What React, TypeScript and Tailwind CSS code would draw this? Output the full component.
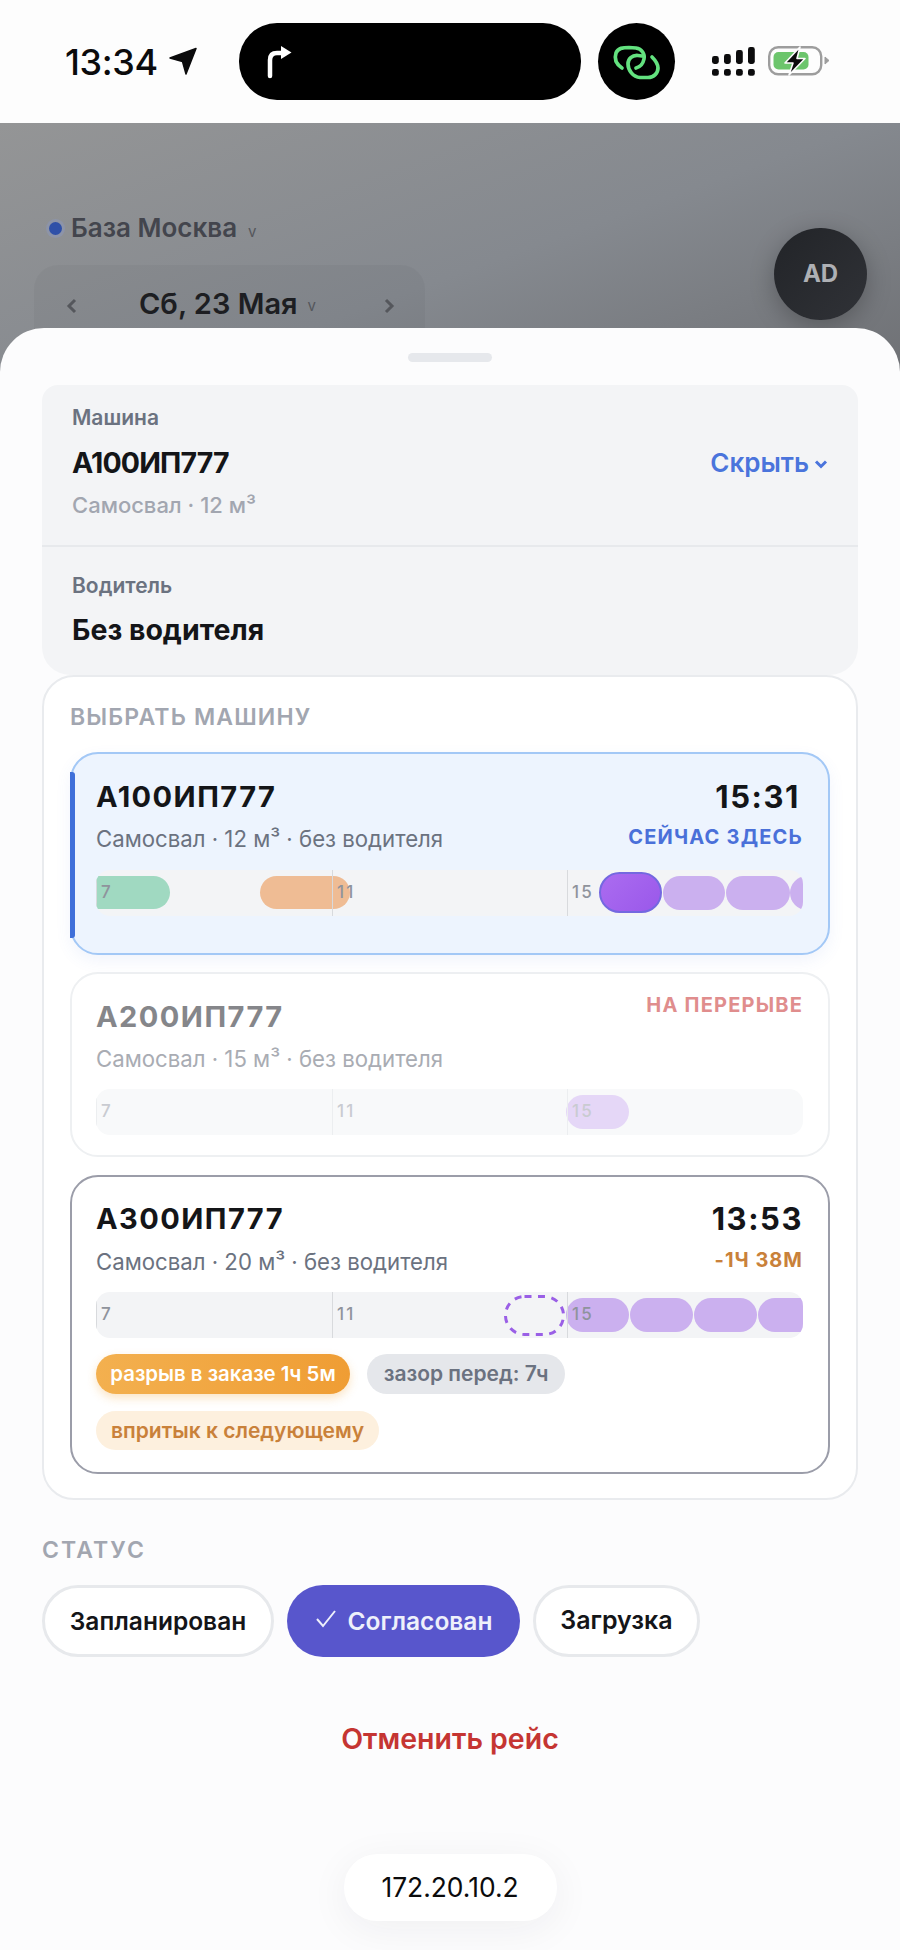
type Segment = { left: number; right: number; kind: "green" | "orange" | "purple" | "active" | "ghost" | "dashed" };

const HOURS = [
  { label: "7", x: 0 },
  { label: "11", x: 236 },
  { label: "15", x: 471 },
];

const SEG_CLASS: Record<Segment["kind"], string> = {
  green: "top-[6px] h-[33px] rounded-[18px] bg-[#a0d9c1]",
  orange: "top-[6px] h-[33px] rounded-[18px] bg-[#efbc94]",
  purple: "top-[6px] h-[34px] rounded-[18px] bg-[#cbb0ef]",
  active: "top-[2px] h-[41px] rounded-[21px] border-2 border-[#7468e0] bg-[linear-gradient(135deg,#ab6cf0,#9a58ea)]",
  ghost: "top-[6px] h-[34px] rounded-[18px] bg-[#e5d7f7]",
  dashed: "top-[3px] h-[41px]",
};

function Timeline({ segments, faded }: { segments: Segment[]; faded?: boolean }) {
  return (
    <div className={`relative h-[46px] w-[707px] overflow-hidden rounded-[14px] ${faded ? "bg-[#f8f9fa]" : "bg-[#f3f4f6]"}`}>
      {segments.map((s) => (
        <div
          key={s.left}
          className={`absolute ${SEG_CLASS[s.kind]}`}
          style={{ left: s.left, width: s.right - s.left }}
        >
          {s.kind === "dashed" && (
            <svg width="61" height="41" viewBox="0 0 61 41">
              <rect x="1.5" y="1.5" width="58" height="38" rx="19" fill="none" stroke="#9a5fe6" strokeWidth="3" strokeDasharray="7 6.5" />
            </svg>
          )}
        </div>
      ))}
      {HOURS.map((h) => (
        <div key={h.label}>
          <div className={`absolute top-0 h-full w-px ${faded ? "bg-[#eceef0]" : "bg-[#d8dadd]"}`} style={{ left: h.x }} />
          <span
            className={`absolute top-[12px] text-[17px] leading-[20px] font-medium tracking-[0.13em] ${faded ? "text-[#c9cbd1]" : "text-[#8f939c]"}`}
            style={{ left: h.x + 5 }}
          >
            {h.label}
          </span>
        </div>
      ))}
    </div>
  );
}

function NavArrow() {
  return (
    <svg width="28" height="28" viewBox="0 0 28 28" className="ml-[11px] mt-[-1px]">
      <path d="M27 1.5 L17 27 L13.5 14.5 L1 11 Z" fill="#0b0b0c" stroke="#0b0b0c" strokeWidth="1.5" strokeLinejoin="round" />
    </svg>
  );
}

function TurnArrow() {
  return (
    <svg width="26" height="34" viewBox="0 0 26 34" className="ml-[27px]">
      <path d="M4 31 V15 Q4 8 11 8 H17" fill="none" stroke="#fff" strokeWidth="4.5" strokeLinecap="round" />
      <path d="M15 1 L25.5 7.5 L15 14 Z" fill="#fff" />
    </svg>
  );
}

function LinkLoops() {
  return (
    <svg width="60" height="50" viewBox="0 0 60 50">
      <path d="M15 31 C9 27 7 22 9 16 C11 11 16 10.5 22 10.5 L29 11 C35 12 38 17 37 22 C36 27 33 30 29 31" fill="none" stroke="#63e27f" strokeWidth="3.7" strokeLinecap="round" />
      <path d="M35 19 L31 18.5 C25 18 21 22 21 27 C21 33 26 40 33 40.5 L41 40.5 C47 40.5 51 36 51 31 C51 26 48 23 45 20" fill="none" stroke="#63e27f" strokeWidth="3.7" strokeLinecap="round" />
    </svg>
  );
}

function SignalDots() {
  const cols = [
    { x: 0, top: 9, h: 8 },
    { x: 12, top: 7, h: 10 },
    { x: 24, top: 3, h: 14 },
    { x: 36, top: 0, h: 17 },
  ];
  return (
    <svg width="43" height="29" viewBox="0 0 43 29" className="ml-[37px]">
      {cols.map((c) => (
        <g key={c.x} fill="#0c0c0d">
          <rect x={c.x} y={c.top} width="6.8" height={c.h} rx="2.4" />
          <rect x={c.x} y="22" width="6.8" height="6.8" rx="2.2" />
        </g>
      ))}
    </svg>
  );
}

function Battery() {
  return (
    <svg width="62" height="31" viewBox="0 0 62 31" className="ml-[13px]">
      <rect x="1.2" y="1.2" width="52" height="27" rx="9" fill="none" stroke="#9d9d9d" strokeWidth="2.4" />
      <rect x="5.5" y="6" width="35" height="17.5" rx="5" fill="#6cc56c" />
      <path d="M57 11 L61 14.5 L57 18 Z" fill="#9d9d9d" stroke="#9d9d9d" strokeWidth="1" strokeLinejoin="round" />
      <path d="M32 1 L17 17 H25 L21 29 L37 12.5 H29 Z" fill="#0c0c0d" stroke="#fdfdfd" strokeWidth="1.6" strokeLinejoin="round" />
    </svg>
  );
}

function StatusBar() {
  return (
    <div className="flex h-[123px] items-start bg-[#fdfdfd] pt-[23px]">
      <div className="flex h-[77px] w-[239px] items-center pl-[65px]">
        <span className="text-[36px] leading-[40px] font-medium tracking-[-0.01em] text-[#0b0b0c]">13:34</span>
        <NavArrow />
      </div>
      <div className="flex h-[77px] w-[342px] items-center rounded-[38px] bg-black">
        <TurnArrow />
      </div>
      <div className="ml-[17px] flex h-[77px] w-[77px] items-center justify-center rounded-full bg-black">
        <LinkLoops />
      </div>
      <div className="flex h-[77px] items-center">
        <SignalDots />
        <Battery />
      </div>
    </div>
  );
}

function DimmedHeader() {
  return (
    <div className="flex h-[249px] items-start justify-between overflow-hidden bg-[linear-gradient(160deg,#949596_0%,#85898f_55%,#6f7175_100%)] pl-[34px] pr-[33px]">
      <div className="pt-[91px]">
        <div className="flex h-[28px] items-center pl-[15px]">
          <span className="h-[13px] w-[13px] rounded-full bg-[#2f50a8] shadow-[0_0_0_3px_#8d94a8]" />
          <span className="ml-[9px] text-[26px] leading-[28px] font-semibold text-[#43454d]">База Москва</span>
          <span className="ml-[11px] mt-[6px] text-[15px] leading-[15px] text-[#55575c]">v</span>
        </div>
        <div className="mt-[23px] flex h-[90px] w-[391px] items-start rounded-[24px] bg-[#00000008] pt-[25px]">
          <svg width="12" height="16" viewBox="0 0 12 16" className="ml-[32px] mt-[8px]">
            <path d="M9 2 L3 8 L9 14" fill="none" stroke="#55575c" strokeWidth="3" />
          </svg>
          <span className="ml-[61px] text-[29px] leading-[28px] font-semibold text-[#1d1e22]">Сб, 23 Мая</span>
          <span className="ml-[10px] mt-[8px] text-[15px] leading-[15px] text-[#55575c]">v</span>
          <svg width="12" height="16" viewBox="0 0 12 16" className="ml-[67px] mt-[8px]">
            <path d="M3 2 L9 8 L3 14" fill="none" stroke="#55575c" strokeWidth="3" />
          </svg>
        </div>
      </div>
      <div className="mt-[105px] flex h-[92px] w-[93px] items-center justify-center rounded-full bg-[linear-gradient(135deg,#222428,#303237)] shadow-[0_6px_24px_#00000040]">
        <span className="text-[24px] font-bold text-[#aeb0b4]">AD</span>
      </div>
    </div>
  );
}

function SummaryCard() {
  return (
    <div className="mt-[23px] rounded-[28px] rounded-t-[16px] bg-[#f3f4f6]">
      <div className="border-b-2 border-[#e7e9ec] px-[30px] pb-[26px] pt-[20px]">
        <div className="text-[21px] leading-[26px] font-semibold text-[#6b7280]">Машина</div>
        <div className="mt-[14px] flex items-center justify-between">
          <span className="text-[28.5px] leading-[36px] font-bold tracking-[-0.03em] text-[#141518]">А100ИП777</span>
          <span className="flex items-center text-[26px] leading-[36px] font-semibold text-[#4a74dc]">
            Скрыть
            <svg width="14" height="9" viewBox="0 0 14 9" className="ml-[5px] mr-[0px] mt-[2px]">
              <path d="M2 1.5 L7 6.5 L12 1.5" fill="none" stroke="#4a74dc" strokeWidth="3" />
            </svg>
          </span>
        </div>
        <div className="mt-[10px] text-[22px] leading-[28px] font-medium text-[#a2a6b0]">Самосвал · 12 м³</div>
      </div>
      <div className="px-[30px] pb-[27px] pt-[26px]">
        <div className="text-[21px] leading-[26px] font-semibold text-[#6b7280]">Водитель</div>
        <div className="mt-[13px] text-[28.5px] leading-[36px] font-bold text-[#141518]">Без водителя</div>
      </div>
    </div>
  );
}

function TruckList() {
  return (
    <div className="rounded-[32px] border-2 border-[#e9ebee] bg-white px-[26px] pb-[24px] pt-[27px]">
      <div className="text-[23px] leading-[26px] font-semibold tracking-[0.05em] text-[#a2a6b0]">ВЫБРАТЬ МАШИНУ</div>

      {/* Текущая машина */}
      <div className="relative mt-[22px] h-[203px] rounded-[28px] border-2 border-[#a3c8f6] bg-[#edf4fe] pl-[24px] pt-[25px] shadow-[0_6px_16px_#4a74dc14]">
        <div className="absolute left-[-2px] top-[18px] h-[166px] w-[5px] rounded-r-[3px] bg-[#3f6fd9]" />
        <div className="flex w-[707px] items-center justify-between">
          <span className="text-[29px] leading-[36px] font-bold tracking-[0.05em] text-[#141518]">А100ИП777</span>
          <span className="pr-[3px] text-[31px] leading-[36px] font-bold tracking-[0.05em] text-[#141518]">15:31</span>
        </div>
        <div className="mt-[10px] flex w-[707px] items-center justify-between">
          <span className="text-[22.2px] leading-[28px] text-[#6b7280]">Самосвал · 12 м³ · без водителя</span>
          <span className="mt-[-4px] text-[20px] leading-[28px] font-bold tracking-[0.06em] text-[#4a70d9]">СЕЙЧАС ЗДЕСЬ</span>
        </div>
        <div className="mt-[17px]">
          <Timeline
            segments={[
              { left: -20, right: 74, kind: "green" },
              { left: 164, right: 254, kind: "orange" },
              { left: 503, right: 566, kind: "active" },
              { left: 567, right: 629, kind: "purple" },
              { left: 630, right: 694, kind: "purple" },
              { left: 694, right: 760, kind: "purple" },
            ]}
          />
        </div>
      </div>

      {/* На перерыве */}
      <div className="mt-[17px] h-[185px] rounded-[28px] border-2 border-[#eef0f2] bg-white pl-[24px] pt-[25px]">
        <div className="flex w-[707px] items-start justify-between">
          <span className="text-[29px] leading-[36px] font-bold tracking-[0.05em] text-[#85868a]">А200ИП777</span>
          <span className="mt-[-8px] text-[20px] leading-[28px] font-bold tracking-[0.06em] text-[#e08d8d]">НА ПЕРЕРЫВЕ</span>
        </div>
        <div className="mt-[10px] text-[22.2px] leading-[28px] text-[#a9acb3]">Самосвал · 15 м³ · без водителя</div>
        <div className="mt-[16px]">
          <Timeline faded segments={[{ left: 470, right: 533, kind: "ghost" }]} />
        </div>
      </div>

      {/* С разрывом */}
      <div className="mt-[18px] h-[299px] rounded-[28px] border-2 border-[#9b9da9] bg-white pl-[24px] pt-[24px]">
        <div className="flex w-[707px] items-center justify-between">
          <span className="text-[29px] leading-[36px] font-bold tracking-[0.05em] text-[#141518]">А300ИП777</span>
          <span className="text-[31px] leading-[36px] font-bold tracking-[0.05em] text-[#141518]">13:53</span>
        </div>
        <div className="mt-[11px] flex w-[707px] items-center justify-between">
          <span className="text-[22.2px] leading-[28px] text-[#6b7280]">Самосвал · 20 м³ · без водителя</span>
          <span className="mt-[-4px] text-[20px] leading-[28px] font-bold tracking-[0.05em] text-[#c9813a]">-1Ч 38М</span>
        </div>
        <div className="mt-[16px]">
          <Timeline
            segments={[
              { left: 408, right: 469, kind: "dashed" },
              { left: 470, right: 533, kind: "purple" },
              { left: 534, right: 597, kind: "purple" },
              { left: 598, right: 661, kind: "purple" },
              { left: 662, right: 740, kind: "purple" },
            ]}
          />
        </div>
        <div className="mt-[16px] flex gap-[17px]">
          <span className="flex h-[40px] w-[254px] items-center justify-center rounded-full bg-[linear-gradient(90deg,#f3b04f,#ef9d34)] text-[20.4px] font-semibold text-white shadow-[0_4px_10px_#f2a53a4d]">
            разрыв в заказе 1ч 5м
          </span>
          <span className="flex h-[40px] w-[198px] items-center justify-center rounded-full bg-[#e5e7eb] text-[21px] font-semibold text-[#6b7280]">
            зазор перед: 7ч
          </span>
        </div>
        <div className="mt-[17px] flex">
          <span className="flex h-[39px] w-[283px] items-center justify-center rounded-full bg-[#fdf0de] text-[21px] font-semibold text-[#c9813a]">
            впритык к следующему
          </span>
        </div>
      </div>
    </div>
  );
}

function StatusPicker() {
  return (
    <div>
      <div className="mt-[37px] text-[23px] leading-[26px] font-semibold tracking-[0.09em] text-[#a2a6b0]">СТАТУС</div>
      <div className="mt-[22px] flex gap-[13px]">
        <span className="flex h-[72px] w-[232px] items-center justify-center rounded-full border-[3px] border-[#e7e9ec] bg-white text-[24.5px] font-semibold text-[#141518]">
          Запланирован
        </span>
        <span className="flex h-[72px] w-[233px] items-center justify-center rounded-full bg-[#5856cc] text-[24.5px] font-semibold text-[#eef0fb]">
          <svg width="22" height="19" viewBox="0 0 22 19" className="mr-[11px] mt-[-5px]">
            <path d="M2 10 L8 17 L20 2" fill="none" stroke="#eef0fb" strokeWidth="2" />
          </svg>
          Согласован
        </span>
        <span className="flex h-[72px] w-[167px] items-center justify-center rounded-full border-[3px] border-[#e7e9ec] bg-white text-[25px] font-semibold text-[#141518]">
          Загрузка
        </span>
      </div>
    </div>
  );
}

export default function App() {
  return (
    <div className="h-[1950px] w-[900px] overflow-hidden bg-[#fcfcfd] font-[Inter,sans-serif]">
      <StatusBar />
      <DimmedHeader />
      <div className="relative z-10 mt-[-44px] h-[1622px] rounded-t-[44px] bg-[#fcfcfd] px-[42px] pt-[25px]">
        <div className="mx-auto h-[9px] w-[84px] rounded-full bg-[#e6e8ec]" />
        <SummaryCard />
        <TruckList />
        <StatusPicker />
        <div className="mt-[64px] text-center text-[28.5px] leading-[36px] font-semibold text-[#c53532]">Отменить рейс</div>
        <div className="mt-[97px] flex justify-center">
          <span className="flex h-[67px] w-[213px] items-center justify-center rounded-[33px] bg-white text-[26.4px] text-[#0b0b0c] shadow-[0_8px_40px_#1f29370f]">
            172.20.10.2
          </span>
        </div>
      </div>
    </div>
  );
}
